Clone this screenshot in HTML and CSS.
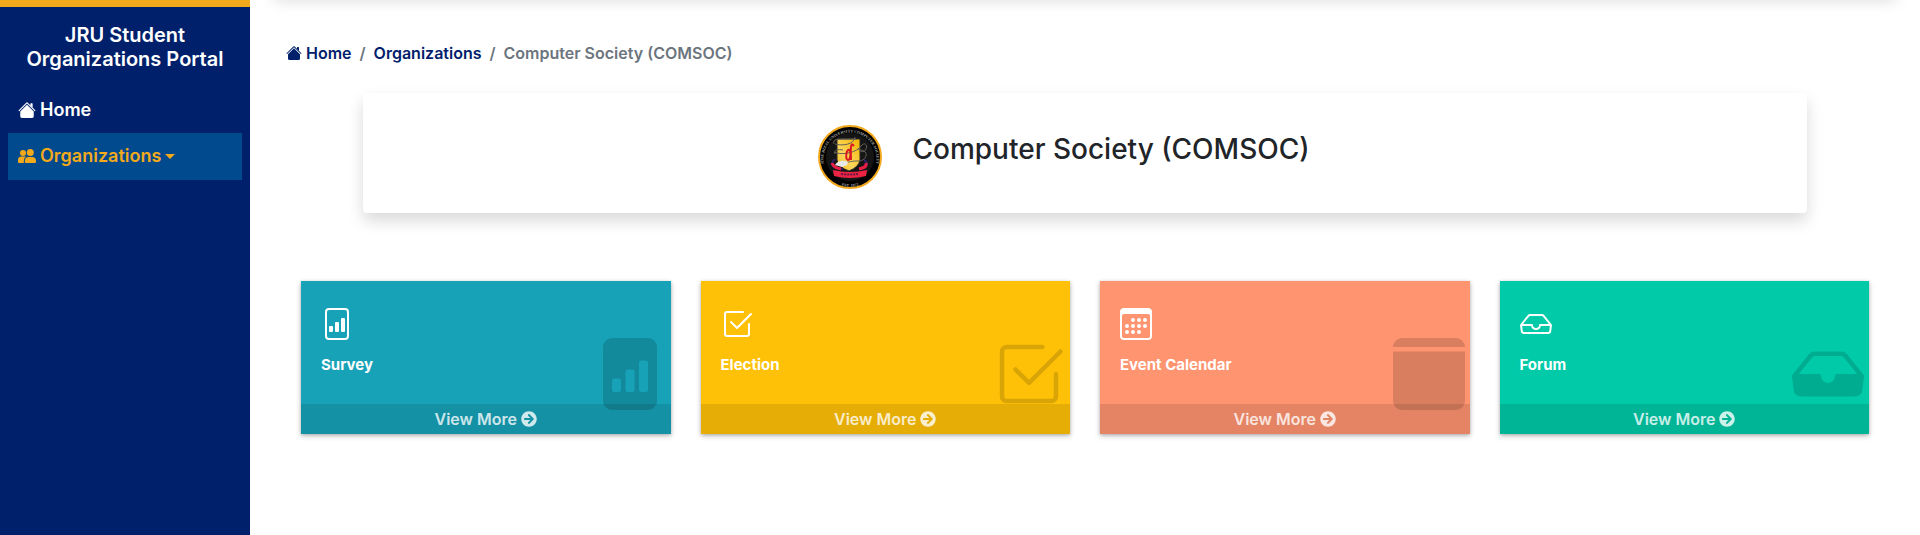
FILE: index.html
```html
<!DOCTYPE html>
<html lang="en">
<head>
<meta charset="utf-8">
<meta name="viewport" content="width=device-width, initial-scale=1">
<title>JRU Student Organizations Portal</title>
<link rel="stylesheet" href="styles.css">
</head>
<body>
<svg class="sprite" aria-hidden="true">
  <symbol id="house" viewBox="0 0 16 16"><path d="m8 3.293 6 6V13.5a1.5 1.5 0 0 1-1.5 1.5h-9A1.5 1.5 0 0 1 2 13.5V9.293l6-6zm5-.793V6l-2-2V2.5a.5.5 0 0 1 .5-.5h1a.5.5 0 0 1 .5.5z"/><path d="M7.293 1.5a1 1 0 0 1 1.414 0l6.647 6.646a.5.5 0 0 1-.708.708L8 2.207 1.354 8.854a.5.5 0 1 1-.708-.708L7.293 1.5z"/></symbol>
  <symbol id="people" viewBox="0 0 18 14"><circle cx="5" cy="4" r="3"/><circle cx="12.300" cy="3.500" r="3.500"/><path d="M0 13v-2a3.500 3.500 0 0 1 3.500-3.500h3.300c.5 0 .9.100 1.200.300A5 5 0 0 0 5.800 12v2H1a1 1 0 0 1-1-1z"/><path d="M6.800 13v-1A4.200 4.200 0 0 1 11 8h3a4 4 0 0 1 4 4v1a1 1 0 0 1-1 1H7.800a1 1 0 0 1-1-1z"/></symbol>
  <symbol id="arrow" viewBox="0 0 512 512"><path d="M256 8c137 0 248 111 248 248S393 504 256 504 8 393 8 256 119 8 256 8zm-28.900 143.600l75.500 72.400H120c-13.300 0-24 10.700-24 24v16c0 13.300 10.700 24 24 24h182.600l-75.500 72.400c-9.700 9.300-9.900 24.800-.4 34.300l11 10.900c9.400 9.400 24.600 9.400 33.900 0L404.300 273c9.400-9.400 9.400-24.600 0-33.900L271.600 106.300c-9.400-9.400-24.600-9.400-33.900 0l-11 10.900c-9.500 9.600-9.300 25.100.4 34.400z"/></symbol>
  <symbol id="graph" viewBox="0 0 16 16"><path d="M4.500 12a.5.5 0 0 1-.5-.5v-2a.5.5 0 0 1 .5-.5h1a.5.5 0 0 1 .5.5v2a.5.5 0 0 1-.5.5h-1zm3 0a.5.5 0 0 1-.5-.5v-4a.5.5 0 0 1 .5-.5h1a.5.5 0 0 1 .5.5v4a.5.5 0 0 1-.5.5h-1zm3 0a.5.5 0 0 1-.5-.5v-6a.5.5 0 0 1 .5-.5h1a.5.5 0 0 1 .5.5v6a.5.5 0 0 1-.5.5h-1z"/><path d="M4 0a2 2 0 0 0-2 2v12a2 2 0 0 0 2 2h8a2 2 0 0 0 2-2V2a2 2 0 0 0-2-2H4zm0 1h8a1 1 0 0 1 1 1v12a1 1 0 0 1-1 1H4a1 1 0 0 1-1-1V2a1 1 0 0 1 1-1z"/></symbol>
  <symbol id="graph-fill" viewBox="0 0 16 16"><path d="M12 0H4a2 2 0 0 0-2 2v12a2 2 0 0 0 2 2h8a2 2 0 0 0 2-2V2a2 2 0 0 0-2-2zm-2 11.500v-6a.5.5 0 0 1 .5-.5h1a.5.5 0 0 1 .5.5v6a.5.5 0 0 1-.5.5h-1a.5.5 0 0 1-.5-.5zm-2.500.5a.5.5 0 0 1-.5-.5v-4a.5.5 0 0 1 .5-.5h1a.5.5 0 0 1 .5.5v4a.5.5 0 0 1-.5.5h-1zm-3 0a.5.5 0 0 1-.5-.5v-2a.5.5 0 0 1 .5-.5h1a.5.5 0 0 1 .5.5v2a.5.5 0 0 1-.5.5h-1z"/></symbol>
  <symbol id="check" viewBox="0 0 16 16"><path d="M3 14.500A1.500 1.500 0 0 1 1.500 13V3A1.500 1.500 0 0 1 3 1.500h8a.5.5 0 0 1 0 1H3a.5.5 0 0 0-.5.5v10a.5.5 0 0 0 .5.5h10a.5.5 0 0 0 .5-.5V8a.5.5 0 0 1 1 0v5a1.500 1.500 0 0 1-1.500 1.500H3z"/><path d="m8.354 10.354 7-7a.5.5 0 0 0-.708-.708L8 9.293 5.354 6.646a.5.5 0 1 0-.708.708l3 3a.5.5 0 0 0 .708 0z"/></symbol>
  <symbol id="calendar" viewBox="0 0 16 16"><path d="M14 0H2a2 2 0 0 0-2 2v12a2 2 0 0 0 2 2h12a2 2 0 0 0 2-2V2a2 2 0 0 0-2-2zM1 3.857C1 3.384 1.448 3 2 3h12c.552 0 1 .384 1 .857v10.286c0 .473-.448.857-1 .857H2c-.552 0-1-.384-1-.857V3.857z"/><path d="M6.500 7a1 1 0 1 0 0-2 1 1 0 0 0 0 2zm3 0a1 1 0 1 0 0-2 1 1 0 0 0 0 2zm3 0a1 1 0 1 0 0-2 1 1 0 0 0 0 2zm-9 3a1 1 0 1 0 0-2 1 1 0 0 0 0 2zm3 0a1 1 0 1 0 0-2 1 1 0 0 0 0 2zm3 0a1 1 0 1 0 0-2 1 1 0 0 0 0 2zm3 0a1 1 0 1 0 0-2 1 1 0 0 0 0 2zm-9 3a1 1 0 1 0 0-2 1 1 0 0 0 0 2zm3 0a1 1 0 1 0 0-2 1 1 0 0 0 0 2zm3 0a1 1 0 1 0 0-2 1 1 0 0 0 0 2z"/></symbol>
  <symbol id="calendar-fill" viewBox="0 0 16 16"><path d="M14 0H2a2 2 0 0 0-2 2h16a2 2 0 0 0-2-2zm2 3H0v11a2 2 0 0 0 2 2h12a2 2 0 0 0 2-2V3z"/></symbol>
  <symbol id="inbox" viewBox="0 0 16 16"><path d="M4.980 4a.5.5 0 0 0-.39.188L1.540 8H6a.5.5 0 0 1 .5.5 1.500 1.500 0 1 0 3 0A.5.5 0 0 1 10 8h4.460l-3.050-3.812A.5.5 0 0 0 11.020 4H4.980zm9.954 5H10.450a2.500 2.500 0 0 1-4.900 0H1.066l.32 2.562a.5.5 0 0 0 .497.438h12.234a.5.5 0 0 0 .496-.438L14.933 9zM3.809 3.563A1.500 1.500 0 0 1 4.981 3h6.038a1.500 1.500 0 0 1 1.172.563l3.700 4.625a.5.5 0 0 1 .105.374l-.39 3.124A1.500 1.500 0 0 1 14.117 13H1.883a1.500 1.500 0 0 1-1.489-1.314l-.39-3.124a.5.5 0 0 1 .106-.374l3.700-4.625z"/></symbol>
  <symbol id="inbox-fill" viewBox="0 0 16 16"><path d="M4.980 4a.5.5 0 0 0-.39.188L1.540 8H6a.5.5 0 0 1 .5.5 1.500 1.500 0 1 0 3 0A.5.5 0 0 1 10 8h4.460l-3.050-3.812A.5.5 0 0 0 11.020 4H4.980zm-1.170-.437A1.500 1.500 0 0 1 4.980 3h6.040a1.500 1.500 0 0 1 1.170.563l3.700 4.625a.5.5 0 0 1 .106.374l-.39 3.124A1.500 1.500 0 0 1 14.117 13H1.883a1.500 1.500 0 0 1-1.489-1.314l-.39-3.124a.5.5 0 0 1 .106-.374l3.700-4.625z"/></symbol>
</svg>

<div class="layout">
  <aside class="sidebar">
    <h2 class="brand">JRU Student Organizations Portal</h2>
    <nav class="menu" aria-label="Main">
      <a class="menu-link" href="#"><svg class="menu-icon"><use href="#house"/></svg>Home</a>
      <a class="menu-link active" href="#"><svg class="menu-icon"><use href="#people"/></svg>Organizations<span class="caret"></span></a>
    </nav>
  </aside>

  <div class="content">
    <header class="topbar"></header>
    <main class="page">
      <nav aria-label="Breadcrumb">
        <ol class="breadcrumb">
          <li><a href="#"><svg class="crumb-icon"><use href="#house"/></svg>Home</a></li>
          <li><a href="#">Organizations</a></li>
          <li aria-current="page">Computer Society (COMSOC)</li>
        </ol>
      </nav>

      <section class="org-card">
        <svg class="org-logo" viewBox="0 0 64 64" role="img" aria-label="Computer Society seal">
          <defs>
            <linearGradient id="shield" x1="1" y1="0" x2="0" y2="1"><stop offset="0" stop-color="#f5b400"/><stop offset=".6" stop-color="#fbd75c"/><stop offset="1" stop-color="#f6b817"/></linearGradient>
            <path id="rim-top" d="M5.800 38A26.500 26.500 0 1 1 58.200 38"/>
            <path id="rim-bottom" d="M15 56.500A30 30 0 0 0 49 56.500"/>
          </defs>
          <circle cx="32" cy="32" r="31" fill="#000" stroke="#f2a81d" stroke-width="2"/>
          <circle cx="32" cy="32" r="24" fill="#151515"/>
          <text class="seal-text"><textPath href="#rim-top" startOffset="50%">JOSE RIZAL UNIVERSITY COMPUTER SOCIETY</textPath></text>
          <text class="seal-text"><textPath href="#rim-bottom" startOffset="50%">EST. 1972</textPath></text>
          <path d="M17 34c-4 3-4 8 2 9l6 1M46 35c4 2 4 6-1 8" fill="none" stroke="#2b2167" stroke-width="2"/>
          <path d="M14 38c1 4 5 5 9 6M48 38c1 4-3 5-7 6" fill="none" stroke="#e81f45" stroke-width="3"/>
          <path d="M19 14h23v21q-1 7-11 11-11-4-12-11z" fill="url(#shield)" stroke="#2a2a2a"/>
          <path d="M37 12c-1 8-13 9-20 7M16 19c-2-5 5-5 9-5h13M16 27c8 4 24 0 27-6 3-4 7-2 5 3s-7 2-8-1M17 29c-2-4 3-5 8-4M42 25c10 0 7 12-3 11-7 0-11 2-14 2" fill="none" stroke="#65605a" stroke-width="1"/>
          <path d="M34 19c-2 2-1 7-1 16M32 25c-4-2-5 9-2 10 2 0 3-5 2-10M34 19l2 2" fill="none" stroke="#d91a20" stroke-width="2"/>
          <path d="M17 40c3-5 8-5 13-3l-1 3-5 2z" fill="#e8e8e8"/>
          <path d="M15 45q17 4 34 0l-1 6q-16 4-32 0z" fill="#ed2344"/>
          <path d="M23 49q9 1 17 0" fill="none" stroke="#6d1742" stroke-width="2" stroke-dasharray="2 1"/>
        </svg>
        <h1 class="org-name">Computer Society (COMSOC)</h1>
      </section>

      <section class="tiles" aria-label="Organization sections">
        <article class="tile tile-survey">
          <div class="tile-body"><svg class="tile-icon"><use href="#graph"/></svg><h3 class="tile-title">Survey</h3></div>
          <svg class="tile-mark"><use href="#graph-fill"/></svg>
          <a class="tile-more" href="#">View More <svg class="more-icon"><use href="#arrow"/></svg></a>
        </article>
        <article class="tile tile-election">
          <div class="tile-body"><svg class="tile-icon"><use href="#check"/></svg><h3 class="tile-title">Election</h3></div>
          <svg class="tile-mark"><use href="#check"/></svg>
          <a class="tile-more" href="#">View More <svg class="more-icon"><use href="#arrow"/></svg></a>
        </article>
        <article class="tile tile-calendar">
          <div class="tile-body"><svg class="tile-icon"><use href="#calendar"/></svg><h3 class="tile-title">Event Calendar</h3></div>
          <svg class="tile-mark"><use href="#calendar-fill"/></svg>
          <a class="tile-more" href="#">View More <svg class="more-icon"><use href="#arrow"/></svg></a>
        </article>
        <article class="tile tile-forum">
          <div class="tile-body"><svg class="tile-icon"><use href="#inbox"/></svg><h3 class="tile-title">Forum</h3></div>
          <svg class="tile-mark"><use href="#inbox-fill"/></svg>
          <a class="tile-more" href="#">View More <svg class="more-icon"><use href="#arrow"/></svg></a>
        </article>
      </section>
    </main>
  </div>
</div>
</body>
</html>
```
FILE: styles.css
```css
* { box-sizing: border-box; }

body {
  margin: 0;
  background: #fff;
  color: #212529;
  font: 500 16px/24px Inter, "Liberation Sans", sans-serif;
}

h1, h2, h3, ol { margin: 0; padding: 0; }
a { text-decoration: none; color: inherit; }
svg { fill: currentColor; }
.sprite { display: none; }

.layout { display: flex; min-height: 100vh; }

.sidebar {
  flex: 0 0 250px;
  padding: 16px 8px;
  border-top: 7px solid #f2a91c;
  background: #00206b;
  color: #fff;
}

.brand {
  padding: 0 8px;
  font-size: 20px;
  font-weight: 600;
  line-height: 24px;
  text-align: center;
}

.menu { margin-top: 16px; }

.menu-link {
  display: flex;
  align-items: center;
  gap: 4px;
  padding: 11px 10px;
  font-size: 18px;
  font-weight: 600;
}

.menu-link.active { padding-bottom: 12px; background: #004a8d; color: #f2a91c; }
.menu-icon { width: 18px; height: 18px; }

.caret {
  border: 5px solid transparent;
  border-top-color: currentColor;
  border-bottom: 0;
}

.content { flex: 1; min-width: 0; overflow: hidden; }

.topbar {
  height: 16px;
  margin: -24px 24px 0;
  box-shadow: 0 8px 16px rgba(0, 0, 0, .15);
}

.page { padding: 49px 36px 40px; }

.breadcrumb { display: flex; list-style: none; color: #6c757d; font-weight: 600; }
.breadcrumb li + li::before { content: "/"; padding: 0 8px; }
.breadcrumb a { color: #00206b; }
.crumb-icon { width: 16px; height: 16px; margin-right: 4px; vertical-align: -2px; }

.org-card {
  display: flex;
  justify-content: center;
  gap: 30px;
  min-height: 120px;
  margin: 28px 77px 0;
  padding: 32px 66px 24px 24px;
  border-radius: 4px;
  background: #fff;
  box-shadow: 0 8px 16px rgba(0, 0, 0, .15);
}

.org-logo { width: 64px; height: 64px; }
.org-name { margin-top: 8px; font-size: 28px; font-weight: 500; line-height: 32px; }
.seal-text { fill: #aaa; font: 700 4px "Liberation Serif", serif; text-anchor: middle; }

.tiles {
  display: grid;
  grid-template-columns: repeat(4, 1fr);
  gap: 30px;
  margin-top: 68px;
  padding: 0 15px;
}

.tile {
  position: relative;
  color: #fff;
  box-shadow: 0 1px 3px rgba(0, 0, 0, .2), 0 2px 6px rgba(0, 0, 0, .2);
}

.tile-survey { background: #17a2b8; }
.tile-election { background: #ffc107; }
.tile-calendar { background: #ff9470; }
.tile-forum { background: #00caa8; }

.tile-body { padding: 27px 20px; }
.tile-icon { display: block; width: 32px; height: 32px; }
.tile-title { margin-top: 13px; font-size: 15px; font-weight: 700; line-height: 24px; }

.tile-mark {
  position: absolute;
  top: 57px;
  right: 5px;
  width: 72px;
  height: 72px;
  color: rgba(0, 0, 0, .15);
}

.tile-more {
  position: relative;
  display: flex;
  align-items: center;
  justify-content: center;
  gap: 4px;
  padding: 3px 0;
  background: rgba(0, 0, 0, .1);
  color: rgba(255, 255, 255, .8);
  font-weight: 600;
}

.more-icon { width: 16px; height: 16px; }
```
